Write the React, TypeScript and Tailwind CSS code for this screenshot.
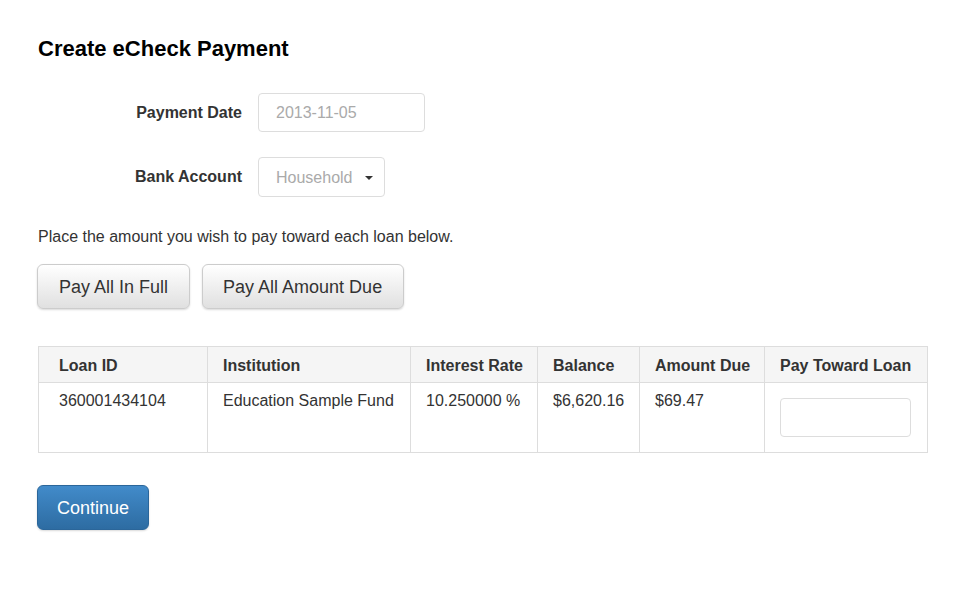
import React from "react";

export default function App() {
  const cols = [
    { h: "Loan ID", w: 169, v: "360001434104", first: true },
    { h: "Institution", w: 203, v: "Education Sample Fund" },
    { h: "Interest Rate", w: 127, v: "10.250000 %" },
    { h: "Balance", w: 102, v: "$6,620.16" },
    { h: "Amount Due", w: 125, v: "$69.47" },
    { h: "Pay Toward Loan", w: 163, v: null },
  ];
  return (
    <div
      className="w-[961px] h-[592px] bg-white text-[#333] text-[16px] leading-[22px]"
      style={{ fontFamily: '"Liberation Sans", Arial, sans-serif' }}
    >
      <div className="pl-[38px] pt-[36px]">
        <h1 className="text-[22px] leading-[26px] font-bold text-black">Create eCheck Payment</h1>

        <div className="mt-[31px] flex items-center gap-[16px]">
          <div className="w-[204px] text-right font-bold">Payment Date</div>
          <div className="w-[167px] h-[39px] border border-[#ddd] rounded-[4px] pl-[17px] flex items-center text-[#aaa]">
            2013-11-05
          </div>
        </div>

        <div className="mt-[25px] flex items-center gap-[16px]">
          <div className="w-[204px] text-right font-bold">Bank Account</div>
          <div className="w-[127px] h-[40px] pt-[1px] border border-[#ddd] rounded-[4px] pl-[17px] pr-[11px] flex items-center justify-between text-[#aaa]">
            <span>Household</span>
            <span className="w-0 h-0 border-l-[4px] border-r-[4px] border-t-[4px] border-l-transparent border-r-transparent border-t-[#333]"></span>
          </div>
        </div>

        <p className="mt-[29px]">Place the amount you wish to pay toward each loan below.</p>

        <div className="mt-[16px] flex gap-[12px] -ml-[1px]">
          <button className="h-[45px] px-[21px] text-[18px] text-[#333] border border-[#ccc] rounded-[6px] bg-gradient-to-b from-white to-[#e0e0e0] shadow-[0_1px_2px_rgba(0,0,0,0.15)]">
            Pay All In Full
          </button>
          <button className="h-[45px] pl-[20px] pr-[21px] text-[18px] text-[#333] border border-[#ccc] rounded-[6px] bg-gradient-to-b from-white to-[#e0e0e0] shadow-[0_1px_2px_rgba(0,0,0,0.15)]">
            Pay All Amount Due
          </button>
        </div>

        <table className="mt-[37px] border-collapse w-[889px] table-fixed">
          <colgroup>
            {cols.map((c) => (
              <col key={c.h} style={{ width: c.w }} />
            ))}
          </colgroup>
          <thead>
            <tr className="bg-[#f5f5f5]">
              {cols.map((c) => (
                <th
                  key={c.h}
                  className={`border border-[#ddd] h-[36px] pt-[2px] text-left font-bold align-middle ${c.first ? "pl-[20px]" : "pl-[15px]"}`}
                >
                  {c.h}
                </th>
              ))}
            </tr>
          </thead>
          <tbody>
            <tr>
              {cols.map((c) => (
                <td
                  key={c.h}
                  className={`border border-[#ddd] h-[70px] align-top pt-[7px] ${c.first ? "pl-[20px]" : "pl-[15px]"}`}
                >
                  {c.v !== null ? (
                    c.v
                  ) : (
                    <div className="mt-[8px] w-[131px] h-[39px] border border-[#ddd] rounded-[4px]"></div>
                  )}
                </td>
              ))}
            </tr>
          </tbody>
        </table>

        <button className="mt-[32px] -ml-[1px] h-[45px] px-[19px] text-[18px] text-white border border-[#2b669a] rounded-[6px] bg-gradient-to-b from-[#428bca] to-[#2d6ca2] shadow-[0_1px_2px_rgba(0,0,0,0.15)]">
          Continue
        </button>
      </div>
    </div>
  );
}
